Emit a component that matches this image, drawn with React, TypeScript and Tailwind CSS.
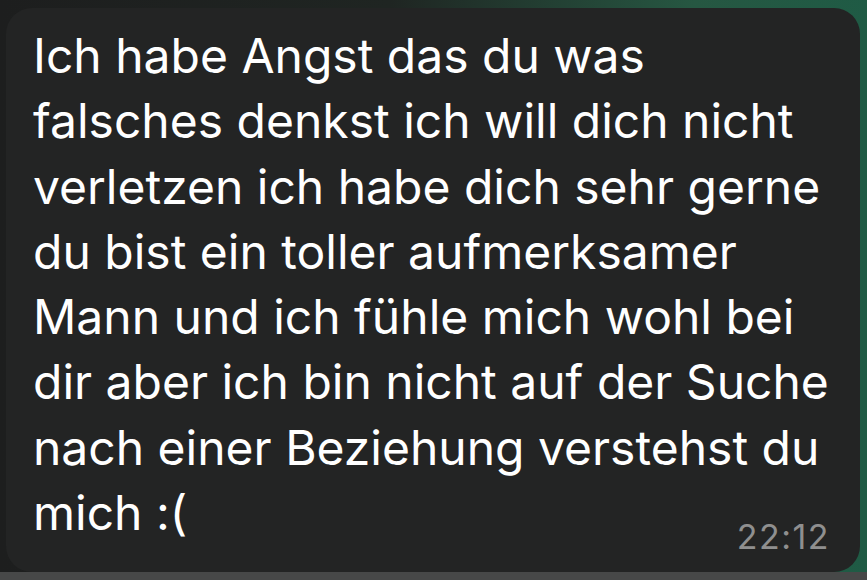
const lines = [
  'Ich habe Angst das du was',
  'falsches denkst ich will dich nicht',
  'verletzen ich habe dich sehr gerne',
  'du bist ein toller aufmerksamer',
  'Mann und ich fühle mich wohl bei',
  'dir aber ich bin nicht auf der Suche',
  'nach einer Beziehung verstehst du',
];

export default function App() {
  return (
    <div className="w-[867px] h-[580px] overflow-hidden flex flex-col bg-[linear-gradient(90deg,#1d1e1e_0%,#1f2522_45%,#265742_80%,#1f5b45_100%)]">
      <div className="flex-1 flex pt-[8px] pl-[6px] pr-[7px]">
        <div
          className="flex-1 rounded-[26px] bg-[#232424] pl-[27px] pr-[30px] pt-[15px] text-white"
          style={{ fontFamily: 'Inter, "Noto Sans", sans-serif' }}
        >
          {lines.map((l) => (
            <div key={l} className="text-[48px] leading-[65.3px] whitespace-nowrap">
              {l}
            </div>
          ))}
          <div className="flex items-end justify-between">
            <span className="text-[48px] leading-[65.3px]">mich :(</span>
            <span className="text-[34px] leading-none mb-[-9px] text-[#8f8f8f] tracking-[1.5px]">22:12</span>
          </div>
        </div>
      </div>
      <div className="h-[8px] bg-[#474848]" />
    </div>
  );
}
